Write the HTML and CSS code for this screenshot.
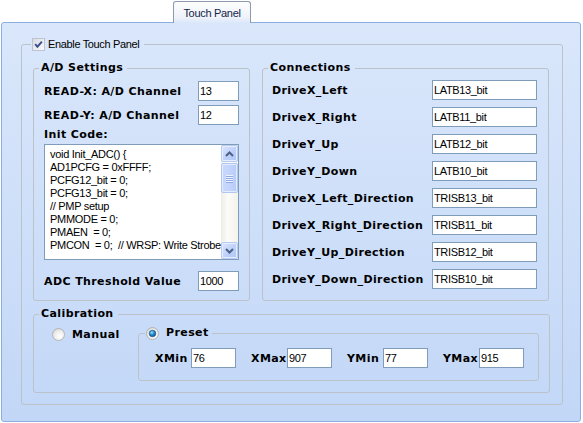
FILE: index.html
```html
<!DOCTYPE html>
<html>
<head>
<meta charset="utf-8">
<link rel="stylesheet" href="styles.css">
</head>
<body>
<div class="window">
  <div class="tabstrip"><div class="tab">Touch Panel</div></div>
  <div class="panel">
    <fieldset class="group group-outer">
      <legend class="legend legend-outer"><span class="legend-inner"><svg class="checkbox" width="13" height="13" viewBox="0 0 13 13"><defs><linearGradient id="cbg" x1="0" y1="0" x2="1" y2="1"><stop offset="0" stop-color="#d9dae2"/><stop offset="1" stop-color="#fbfbfc"/></linearGradient></defs><rect x="0.5" y="0.5" width="12" height="12" fill="url(#cbg)" stroke="#bcc2cf"/><path d="M3.2 6.2 L5.4 8.7 L9.9 3.6" fill="none" stroke="#3b4e90" stroke-width="1.9"/></svg><span class="legend-text">Enable Touch Panel</span></span></legend>
      <div class="outer-body">
        <div class="top-row">
          <fieldset class="group group-ad">
            <legend class="legend legend-bold">A/D Settings</legend>
            <div class="ad-body">
              <div class="field-row"><span class="blabel">READ-X: A/D Channel</span><input class="edit edit-sm" type="text" value="13"></div>
              <div class="field-row row-gap"><span class="blabel">READ-Y: A/D Channel</span><input class="edit edit-sm" type="text" value="12"></div>
              <div class="blabel init-label">Init Code:</div>
              <div class="memo">
                <div class="memo-text">void Init_ADC() {
AD1PCFG = 0xFFFF;
PCFG12_bit = 0;
PCFG13_bit = 0;
// PMP setup
PMMODE = 0;
PMAEN  = 0;
PMCON  = 0;  // WRSP: Write Strobe</div>
                <div class="scrollbar">
                  <div class="sb-btn"><svg width="9" height="6" viewBox="0 0 9 6"><path d="M1 5 L4.5 1.5 L8 5" fill="none" stroke="#4d6185" stroke-width="2"/></svg></div>
                  <div class="sb-thumb"><span class="grip"></span><span class="grip"></span><span class="grip"></span><span class="grip"></span></div>
                  <div class="sb-track"></div>
                  <div class="sb-btn"><svg width="9" height="6" viewBox="0 0 9 6"><path d="M1 1 L4.5 4.5 L8 1" fill="none" stroke="#4d6185" stroke-width="2"/></svg></div>
                </div>
              </div>
              <div class="field-row threshold"><span class="blabel">ADC Threshold Value</span><input class="edit edit-sm" type="text" value="1000"></div>
            </div>
          </fieldset>
          <fieldset class="group group-conn">
            <legend class="legend legend-bold">Connections</legend>
            <div class="conn-grid">
              <span class="blabel">DriveX_Left</span><input class="edit" type="text" value="LATB13_bit">
              <span class="blabel">DriveX_Right</span><input class="edit" type="text" value="LATB11_bit">
              <span class="blabel">DriveY_Up</span><input class="edit" type="text" value="LATB12_bit">
              <span class="blabel">DriveY_Down</span><input class="edit" type="text" value="LATB10_bit">
              <span class="blabel">DriveX_Left_Direction</span><input class="edit" type="text" value="TRISB13_bit">
              <span class="blabel">DriveX_Right_Direction</span><input class="edit" type="text" value="TRISB11_bit">
              <span class="blabel">DriveY_Up_Direction</span><input class="edit" type="text" value="TRISB12_bit">
              <span class="blabel">DriveY_Down_Direction</span><input class="edit" type="text" value="TRISB10_bit">
            </div>
          </fieldset>
        </div>
        <fieldset class="group group-cal">
          <legend class="legend legend-bold">Calibration</legend>
          <div class="cal-body">
            <div class="radio-item manual">
              <svg class="radio" width="13" height="13" viewBox="0 0 13 13"><defs><radialGradient id="rgm" cx="0.6" cy="0.65" r="0.75"><stop offset="0" stop-color="#ffffff"/><stop offset="0.6" stop-color="#ececec"/><stop offset="1" stop-color="#cfcfcf"/></radialGradient></defs><circle cx="6.5" cy="6.5" r="6" fill="url(#rgm)" stroke="#b3b3b3"/></svg>
              <span class="blabel">Manual</span>
            </div>
            <fieldset class="group group-preset">
              <legend class="legend legend-preset"><span class="legend-inner"><svg class="radio" width="13" height="13" viewBox="0 0 13 13"><defs><radialGradient id="rgp" cx="0.6" cy="0.65" r="0.75"><stop offset="0" stop-color="#ffffff"/><stop offset="0.6" stop-color="#ececec"/><stop offset="1" stop-color="#cfcfcf"/></radialGradient><radialGradient id="dot" cx="0.4" cy="0.35" r="0.7"><stop offset="0" stop-color="#a8e4ff"/><stop offset="0.45" stop-color="#2a8fd0"/><stop offset="1" stop-color="#0b4f8e"/></radialGradient></defs><circle cx="6.5" cy="6.5" r="6" fill="url(#rgp)" stroke="#b3b3b3"/><circle cx="6.5" cy="6.5" r="3.3" fill="url(#dot)" stroke="#1d4f7e" stroke-width="0.6"/></svg><span class="blabel">Preset</span></span></legend>
              <div class="preset-body">
                <div class="pair"><span class="blabel cal-label">XMin</span><input class="edit edit-cal" type="text" value="76"></div>
                <div class="pair"><span class="blabel cal-label">XMax</span><input class="edit edit-cal" type="text" value="907"></div>
                <div class="pair"><span class="blabel cal-label">YMin</span><input class="edit edit-cal" type="text" value="77"></div>
                <div class="pair"><span class="blabel cal-label">YMax</span><input class="edit edit-cal" type="text" value="915"></div>
              </div>
            </fieldset>
          </div>
        </fieldset>
      </div>
    </fieldset>
  </div>
</div>
</body>
</html>
```
FILE: styles.css
```css
body {
  margin: 0;
  background: #ffffff;
  font-family: "Liberation Sans", Arial, sans-serif;
  font-size: 11px;
  color: #000000;
}

.window {
  width: 583px;
  height: 423px;
}

.tabstrip {
  height: 22px;
  padding-left: 173px;
  display: flex;
  box-sizing: border-box;
}

.tab {
  position: relative;
  z-index: 1;
  margin-top: 1px;
  margin-bottom: -1px;
  width: 78px;
  height: 22px;
  box-sizing: border-box;
  border: 1px solid #8c9bb0;
  border-bottom: none;
  border-radius: 3px 3px 0 0;
  background: linear-gradient(#fefefe, #eef2f9 75%, #dae7fb);
  padding-top: 2px;
  line-height: 18px;
  text-align: center;
  color: #10254a;
  font-size: 11px;
  letter-spacing: -0.3px;
}

.panel {
  margin-left: 1px;
  width: 580px;
  height: 400px;
  box-sizing: border-box;
  border: 1px solid #8aaee0;
  border-radius: 3px;
  background: linear-gradient(#dae7fb, #c2d7f7);
  padding: 14px 17px 0 19px;
}

.group {
  margin: 0;
  padding: 0;
  min-width: 0;
  border: 1px solid #bcc2ca;
  border-radius: 3px;
}

.legend {
  padding: 0 4px 0 2px;
  margin-left: 5px;
  height: 14px;
  line-height: 14px;
}

.legend-inner {
  display: flex;
  align-items: center;
  height: 14px;
}

.legend-outer {
  margin-left: 9px;
  padding: 0 5px 0 1px;
}

.legend-outer .legend-text {
  margin-left: 3px;
  letter-spacing: -0.35px;
}

.legend-preset {
  margin-left: 6px;
  padding: 0 3px 0 1px;
}

.legend-preset .blabel {
  margin-left: 7px;
}

.legend-bold,
.blabel {
  font-family: "DejaVu Sans", Verdana, sans-serif;
  font-weight: bold;
  font-size: 11px;
  letter-spacing: 0.4px;
  white-space: nowrap;
}

.outer-body {
  padding: 10px 12px 11px 11px;
}

.top-row {
  display: flex;
  gap: 12px;
}

.group-ad {
  width: 217px;
  box-sizing: border-box;
}

.group-conn {
  width: 287px;
  box-sizing: border-box;
}

.ad-body {
  padding: 6px 10px 9px 10px;
}

.field-row {
  display: flex;
  align-items: center;
  justify-content: space-between;
  height: 20px;
}

.row-gap {
  margin-top: 4px;
}

.init-label {
  margin-top: 3px;
  line-height: 14px;
}

.threshold {
  margin-top: 11px;
}

.edit {
  box-sizing: border-box;
  height: 20px;
  width: 105px;
  margin: 0;
  padding: 0 1px;
  border: 1px solid #7f9db9;
  border-radius: 0;
  background: #ffffff;
  font-family: "Liberation Sans", Arial, sans-serif;
  font-size: 11px;
  letter-spacing: -0.35px;
  color: #000000;
  outline: none;
}

.edit-sm {
  width: 41px;
}

.edit-cal {
  width: 45px;
}

.memo {
  margin-top: 2px;
  height: 116px;
  box-sizing: border-box;
  border: 1px solid #7f9db9;
  background: #ffffff;
  display: flex;
}

.memo-text {
  flex: 1;
  min-width: 0;
  overflow: hidden;
  white-space: pre;
  padding: 3px 0 0 5px;
  line-height: 13px;
  letter-spacing: -0.3px;
}

.scrollbar {
  width: 17px;
  display: flex;
  flex-direction: column;
  background: linear-gradient(90deg, #eeede5, #fbfbf8 40%, #f3f2ec);
}

.sb-btn {
  height: 17px;
  box-sizing: border-box;
  border: 1px solid #b7cbf5;
  border-radius: 2px;
  background: linear-gradient(135deg, #dbe5fe, #bccff9 60%, #b0c6f5);
  display: flex;
  align-items: center;
  justify-content: center;
  box-shadow: inset 0 0 0 1px #e6edfd;
}

.sb-thumb {
  height: 30px;
  margin-top: 1px;
  box-sizing: border-box;
  border: 1px solid #b2c6f3;
  border-radius: 2px;
  background: linear-gradient(90deg, #c9d8fc, #c3d4fb 50%, #b6cbf8);
  box-shadow: inset 0 0 0 1px #e3ebfd;
  display: flex;
  flex-direction: column;
  align-items: center;
  justify-content: center;
  gap: 1px;
}

.grip {
  width: 7px;
  height: 1px;
  background: #eef3fe;
  box-shadow: 0 1px 0 #8fa9e4;
}

.sb-track {
  flex: 1;
}

.conn-grid {
  display: grid;
  grid-template-columns: 1fr 105px;
  grid-auto-rows: 20px;
  row-gap: 7px;
  align-items: center;
  padding: 5px 11px 11px 9px;
}

.group-cal {
  margin-top: 6px;
}

.cal-body {
  display: flex;
  align-items: flex-start;
  padding: 5px 10px 11px 18px;
}

.radio-item {
  display: flex;
  align-items: center;
  height: 14px;
}

.manual {
  width: 86px;
  margin-top: 1px;
  flex-shrink: 0;
}

.manual .blabel {
  margin-left: 7px;
}

.group-preset {
  flex: 1;
}

.preset-body {
  display: flex;
  gap: 15px;
  padding: 8px 12px 12px 16px;
}

.pair {
  display: flex;
  align-items: center;
  height: 20px;
}

.cal-label {
  width: 36px;
}

svg {
  display: block;
  flex-shrink: 0;
}
```
